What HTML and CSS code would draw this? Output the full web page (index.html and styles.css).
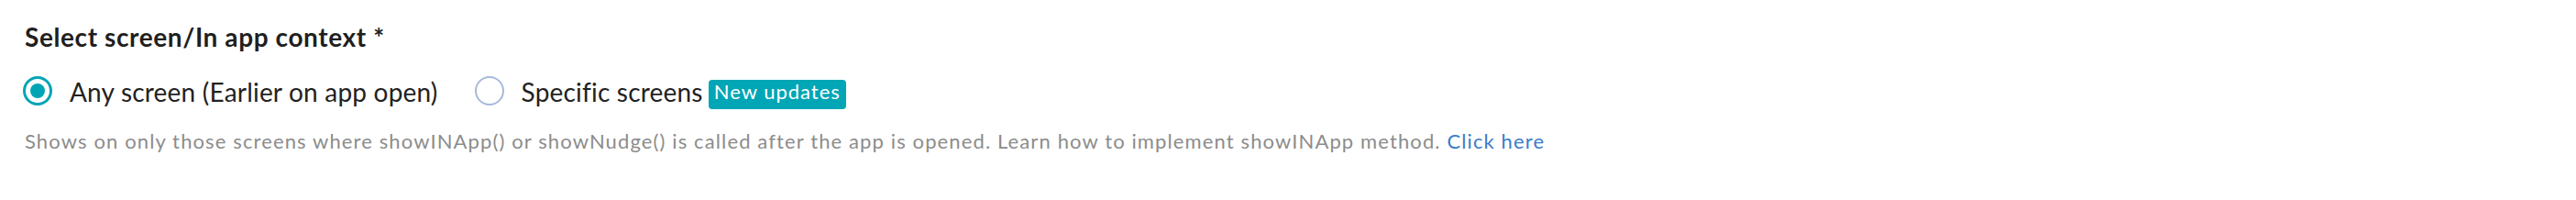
FILE: index.html
```html
<!DOCTYPE html>
<html>
<head>
    <link rel="stylesheet" href="styles.css">
</head>
<body>
    <div class="field">
        <div class="field-label">Select screen/In app context *</div>

        <div class="radio-group">
            <label class="radio checked">
                <span class="radio-circle"></span>
                <span class="radio-text">Any screen (Earlier on app open)</span>
            </label>
            <label class="radio">
                <span class="radio-circle"></span>
                <span class="radio-text">Specific screens</span>
                <span class="badge">New updates</span>
            </label>
        </div>

        <p class="field-help">
            Shows on only those screens where showINApp() or showNudge() is called after the app is opened. Learn how to implement showINApp method.
            <a href="#" class="help-link">Click here</a>
        </p>
    </div>
</body>
</html>
```

FILE: styles.css
```css
body {
    margin: 0;
    background: #ffffff;
    font-family: Lato, "Open Sans", sans-serif;
    color: #222222;
}

.field {
    padding: 23px 25px 0 25px;
}

.field-label {
    font-size: 28px;
    line-height: 34px;
    font-weight: 700;
    letter-spacing: 0.6px;
    color: #1f1f1f;
    padding-left: 2px;
}

.radio-group {
    display: flex;
    align-items: flex-start;
    gap: 40px;
    margin-top: 26px;
}

.radio {
    display: flex;
    align-items: flex-start;
    cursor: pointer;
}

.radio-circle {
    box-sizing: border-box;
    width: 32px;
    height: 32px;
    border-radius: 50%;
    border: 2px solid #a8b9dc;
    margin-right: 19px;
    display: flex;
    align-items: center;
    justify-content: center;
}

.radio.checked .radio-circle {
    border: 3px solid #00a5b5;
}

.radio.checked .radio-circle::after {
    content: "";
    width: 16px;
    height: 16px;
    border-radius: 50%;
    background: #00a5b5;
}

.radio-text {
    font-size: 28px;
    line-height: 34px;
    letter-spacing: 0.2px;
    color: #222222;
}

.badge {
    margin-left: 6px;
    margin-top: 4px;
    background: #00a6b5;
    color: #ffffff;
    font-size: 22px;
    line-height: 26px;
    letter-spacing: 1px;
    padding: 0 6px 6px 6px;
    border-radius: 4px;
}

.field-help {
    margin: 21px 0 0 0;
    padding-left: 2px;
    font-size: 22px;
    line-height: 27px;
    letter-spacing: 1.12px;
    color: #8c8c8c;
}

.help-link {
    color: #3a7cc9;
    text-decoration: none;
}
```
